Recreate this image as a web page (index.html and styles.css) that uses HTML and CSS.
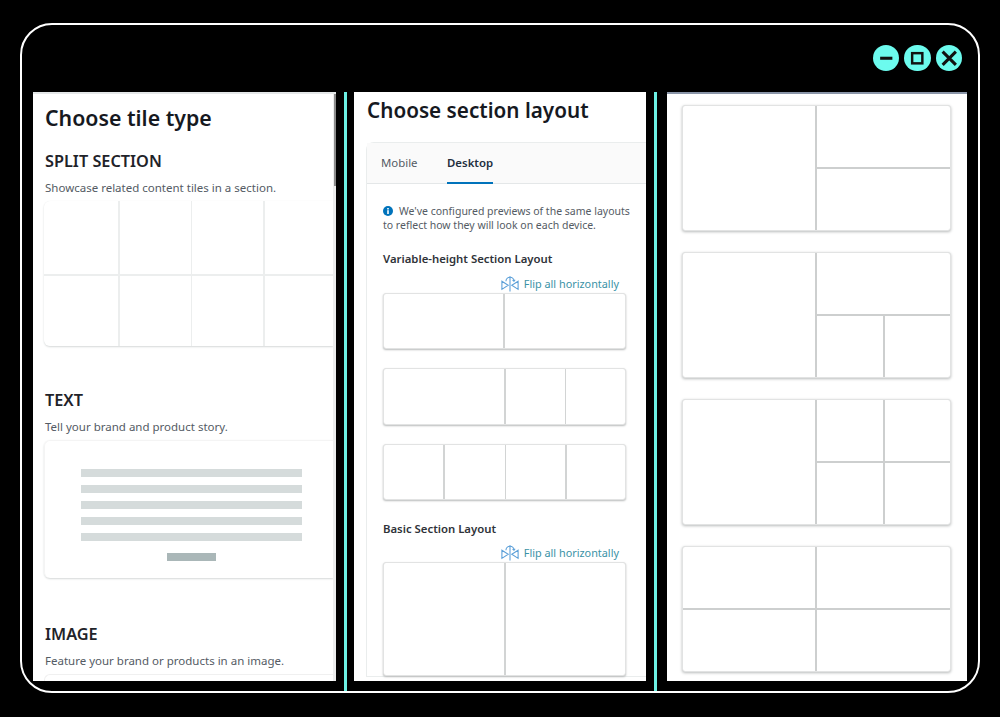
FILE: index.html
```html
<!DOCTYPE html>
<html lang="en">
<head>
<meta charset="utf-8">
<title>Layouts</title>
<link rel="stylesheet" href="styles.css">
</head>
<body>
<div class="frame">
  <div class="winbar">
    <span class="winbtn"><svg viewBox="0 0 26 26" class="winicon"><path d="M7 13H19" stroke-width="3"/></svg></span>
    <span class="winbtn"><svg viewBox="0 0 26 26" class="winicon"><rect x="8" y="8" width="10" height="10" stroke-width="2.4"/></svg></span>
    <span class="winbtn"><svg viewBox="0 0 26 26" class="winicon"><path d="M6.5 6.5L19.5 19.5M19.5 6.5L6.5 19.5" stroke-width="3"/></svg></span>
  </div>
  <div class="columns">
    <section class="panel panel-a">
      <div class="scrollbar"></div>
      <h1 class="title">Choose tile type</h1>
      <h2 class="type-name first">SPLIT SECTION</h2>
      <p class="type-desc">Showcase related content tiles in a section.</p>
      <div class="split-card">
        <i></i><i></i><i></i><i></i><i></i><i></i><i></i><i></i>
      </div>
      <h2 class="type-name second">TEXT</h2>
      <p class="type-desc">Tell your brand and product story.</p>
      <div class="text-card">
        <div class="bar"></div><div class="bar"></div><div class="bar"></div><div class="bar"></div><div class="bar"></div>
        <div class="btn-bar"></div>
      </div>
      <h2 class="type-name third">IMAGE</h2>
      <p class="type-desc">Feature your brand or products in an image.</p>
      <div class="image-card"></div>
    </section>
    <div class="divider"></div>
    <section class="panel panel-b">
      <h1 class="title title-b">Choose section layout</h1>
      <div class="tabs-box">
        <div class="tabs">
          <span class="tab">Mobile</span>
          <span class="tab active">Desktop</span>
        </div>
        <div class="tabs-body">
          <p class="notice"><svg class="info" viewBox="0 0 10 10"><circle cx="5" cy="5" r="5" fill="#0073bb"/><rect x="4.2" y="4.2" width="1.6" height="3.8" fill="#fff"/><rect x="4.2" y="2" width="1.6" height="1.5" fill="#fff"/></svg>We've configured previews of the same layouts<br>to reflect how they will look on each device.</p>
          <h3 class="group-name">Variable-height Section Layout</h3>
          <div class="flip"><svg class="flip-icon" viewBox="0 0 20 18"><path d="M5.5 6.5A4.2 4.2 0 0 1 14.5 6.5"/><path d="M14.5 6.5l-1.6-1.4M14.5 6.5l1.2-1.7"/><path d="M10 1v17"/><path d="M1 6.5L8 11 1 15.5ZM19 6.5L12 11 19 15.5Z"/></svg><span>Flip all horizontally</span></div>
          <div class="lay lay-h1"><i></i><i></i></div>
          <div class="lay lay-h2"><i></i><i></i><i></i></div>
          <div class="lay lay-h3"><i></i><i></i><i></i><i></i></div>
          <h3 class="group-name group-basic">Basic Section Layout</h3>
          <div class="flip flip-basic"><svg class="flip-icon" viewBox="0 0 20 18"><path d="M5.5 6.5A4.2 4.2 0 0 1 14.5 6.5"/><path d="M14.5 6.5l-1.6-1.4M14.5 6.5l1.2-1.7"/><path d="M10 1v17"/><path d="M1 6.5L8 11 1 15.5ZM19 6.5L12 11 19 15.5Z"/></svg><span>Flip all horizontally</span></div>
          <div class="lay lay-basic"><i></i><i></i></div>
        </div>
      </div>
    </section>
    <div class="divider divider-b"></div>
    <section class="panel panel-c">
      <div class="big big-1"><i class="tall"></i><i></i><i></i></div>
      <div class="big big-2"><i class="tall"></i><i class="wide"></i><i></i><i></i></div>
      <div class="big big-3"><i class="tall"></i><i></i><i></i><i></i><i></i></div>
      <div class="big big-4"><i></i><i></i><i></i><i></i></div>
    </section>
  </div>
</div>
</body>
</html>
```
FILE: styles.css
```css
* { box-sizing: border-box; }
html, body { margin: 0; height: 717px; overflow: hidden; background: #000; }
body { padding: 23px 20px 24px; font-family: "Noto Sans", "Open Sans", sans-serif; }
.frame {
  height: 670px;
  border: 2px solid #fff;
  border-radius: 32px;
  display: flex;
  flex-direction: column;
  background: #000;
}
.winbar {
  height: 67px;
  flex: none;
  display: flex;
  justify-content: flex-end;
  align-items: flex-start;
  gap: 5px;
  padding: 19.5px 15.75px 0 0;
}
.winbtn {
  width: 26.5px;
  height: 26.5px;
  border-radius: 50%;
  background: #6cfbee;
  display: flex;
  align-items: center;
  justify-content: center;
}
.winicon { width: 26.5px; height: 26.5px; fill: none; stroke: #111; }
.columns {
  flex: 1;
  min-height: 0;
  display: flex;
  padding-left: 11px;
}
.divider { width: 3px; background: #6cf0e4; margin: 0 7px 0 8px; flex: none; }
.divider-b { margin-right: 10px; }
.panel {
  background: #fff;
  height: 589px;
  overflow: hidden;
  position: relative;
  flex: none;
  color: #16191f;
}
.panel-a { width: 303px; padding: 0 3px 0 12px; border-top: 2px solid #e4e7e8; }
.panel-b { width: 292px; padding-left: 12px; }
.panel-c { width: 300px; padding: 11px 16px 0 15px; border-top: 2px solid #8a95a8; }
.scrollbar {
  position: absolute;
  top: 0; right: 0;
  width: 2px;
  height: 92px;
  background: #8b8b8b;
  z-index: 1;
}
.panel-a::after {
  content: "";
  position: absolute;
  top: 0; right: 0; bottom: 0;
  width: 3px;
  background: #eceded;
  z-index: 0;
}
.title { margin: 0; font-size: 21.3px; line-height: 28px; font-weight: 600; color: #16191f; }
.panel-a .title { padding-top: 10px; }
.title-b { padding: 4px 0 0 1px; font-size: 20.7px; }
.type-name { margin: 0; font-size: 16.3px; line-height: 20px; font-weight: 600; color: #1f2329; }
.type-name.first { margin-top: 19px; }
.type-name.second { margin-top: 44px; }
.type-name.third { margin-top: 46px; }
.type-desc { margin: 9px 0 0; font-size: 11.5px; line-height: 16px; color: #545b64; }
.split-card {
  margin: 5px 0 0 -1px;
  height: 145px;
  display: grid;
  grid-template-columns: 74px 71px 71px 1fr;
  grid-template-rows: 73px 1fr;
  gap: 1.5px;
  background: #eceeee;
  border-radius: 6px 0 0 6px;
  overflow: hidden;
  box-shadow: 0 1px 2px #d5d8d8;
}
.split-card i { background: #fff; }
.text-card {
  margin: 5px 0 0 -1px;
  height: 138px;
  padding: 28px 31px 0 36px;
  border-radius: 6px 0 0 6px;
  border-top: 1px solid #f4f4f4;
  border-left: 1px solid #f4f4f4;
  box-shadow: 0 1px 2px #d5d8d8;
  display: flex;
  flex-direction: column;
  gap: 8px;
  align-items: stretch;
}
.bar { height: 8px; background: #d5dbdb; flex: none; }
.btn-bar { height: 8px; width: 49px; background: #aab7b8; align-self: center; margin-top: 4px; }
.image-card {
  margin: 5px 0 0 -1px;
  height: 40px;
  border-radius: 6px 0 0 0;
  border-top: 1px solid #f0f0f0;
  border-left: 1px solid #f0f0f0;
}
.tabs-box {
  margin-top: 18px;
  border: 1px solid #eaeded;
  border-right: 0;
  border-radius: 8px 0 0 0;
}
.tabs {
  height: 41px;
  background: #fafafa;
  border-bottom: 1px solid #e4e7e8;
  display: flex;
  gap: 29.5px;
  padding-left: 14px;
}
.tab { font-size: 11.4px; line-height: 40px; color: #545b64; height: 41px; }
.tab.active { font-weight: 600; color: #232f3e; border-bottom: 2px solid #0073bb; }
.tabs-body { padding: 20px 20px 0 16px; }
.notice { margin: 0; font-size: 10.5px; line-height: 14px; color: #545b64; white-space: nowrap; }
.info { width: 10px; height: 10px; margin-right: 6px; vertical-align: -1px; }
.group-name { margin: 19px 0 0; font-size: 11.35px; line-height: 16px; font-weight: 600; color: #2f3339; }
.group-basic { margin-top: 21px; }
.flip {
  margin-top: 7px;
  height: 18px;
  display: flex;
  justify-content: flex-end;
  align-items: center;
  gap: 5px;
  font-size: 10.85px;
  color: #3a92a6;
  margin-right: 7px;
}
.flip-basic { margin-top: 6px; }
.flip-icon { width: 18px; height: 17px; fill: none; stroke: #5b9fd8; stroke-width: 1.2; flex: none; }
.lay {
  display: grid;
  gap: 1.5px;
  background: #d2d4d4;
  border-radius: 3px;
  overflow: hidden;
  box-shadow: 0 1px 2px #b9bbbb;
  border: 1px solid #e2e3e3;
}
.lay i { background: #fff; }
.lay-h1 { height: 56px; margin-top: 1px; grid-template-columns: 119px 1fr; }
.lay-h2 { height: 57px; margin-top: 19px; grid-template-columns: 120px 59px 1fr; }
.lay-h3 { height: 56px; margin-top: 19px; grid-template-columns: 59px 60px 59px 1fr; }
.lay-basic { height: 114px; margin-top: 1px; grid-template-columns: 120px 1fr; }
.big {
  height: 126px;
  margin-bottom: 21px;
  display: grid;
  gap: 2px;
  background: #cdcfcf;
  border-radius: 3px;
  overflow: hidden;
  border: 1px solid #e2e3e3;
  box-shadow: 0 1px 3px #b9bbbb;
}
.big i { background: #fff; }
.big .tall { grid-row: span 2; }
.big .wide { grid-column: span 2; }
.big-1 { grid-template-columns: 132px 1fr; grid-template-rows: 61px 1fr; }
.big-2 { grid-template-columns: 132px 66px 1fr; grid-template-rows: 61px 1fr; }
.big-3 { grid-template-columns: 132px 66px 1fr; grid-template-rows: 61px 1fr; }
.big-4 { grid-template-columns: 132px 1fr; grid-template-rows: 61px 1fr; }
```
